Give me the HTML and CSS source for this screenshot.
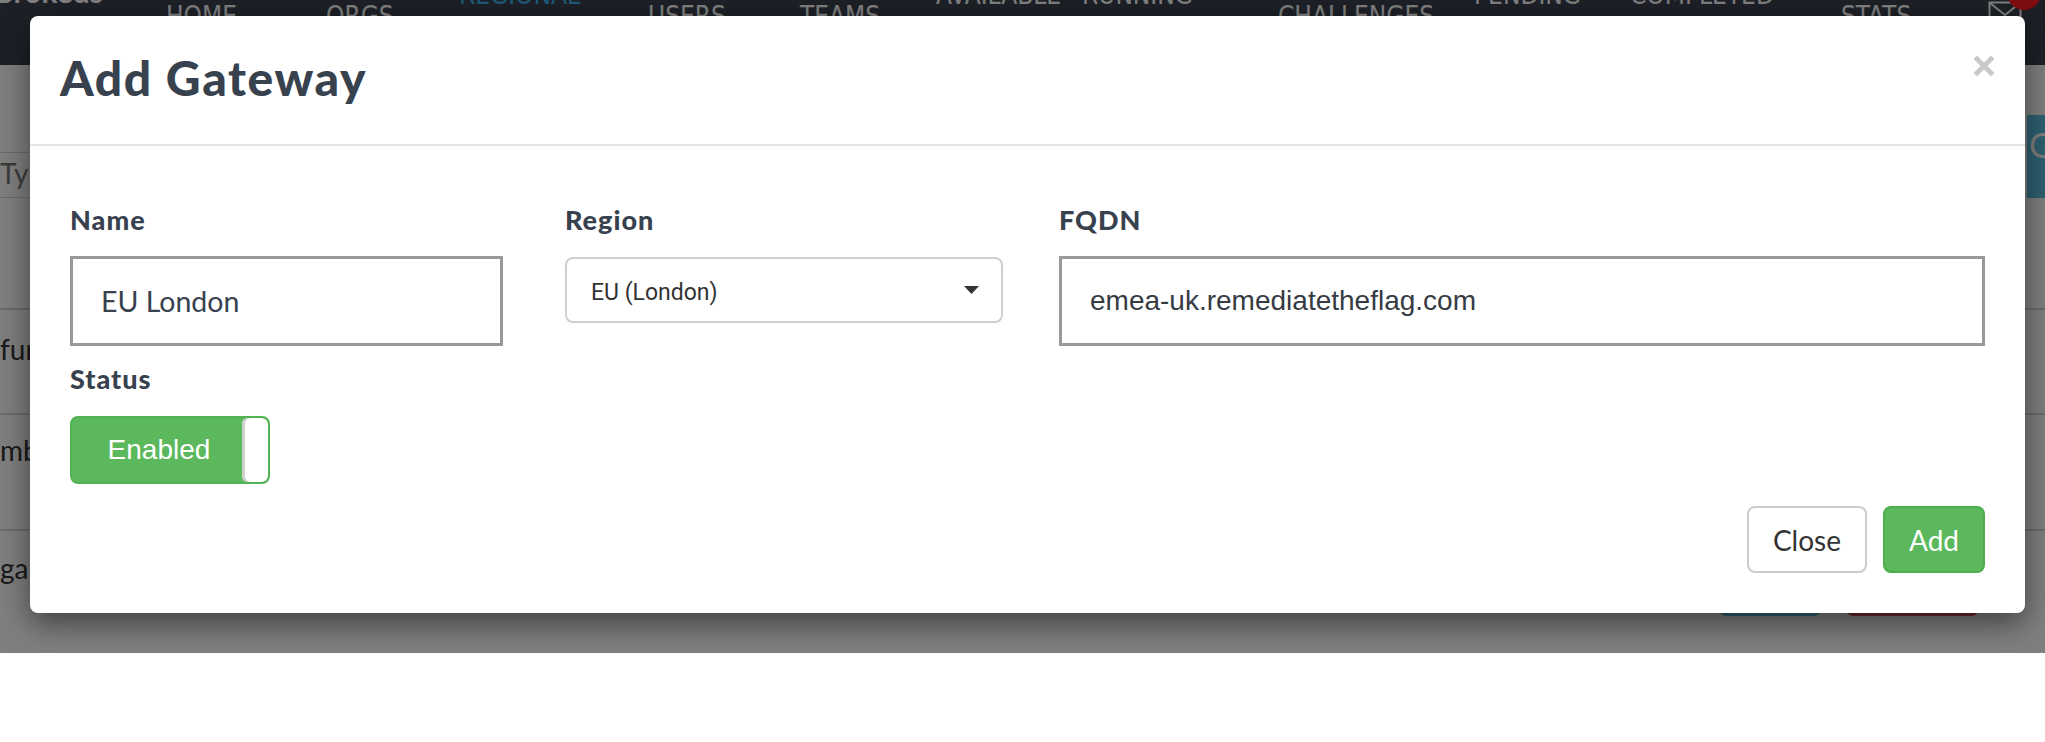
FILE: index.html
```html
<!DOCTYPE html>
<html lang="en">
<head>
<meta charset="utf-8">
<title>Add Gateway</title>
<link rel="stylesheet" href="styles.css">
</head>
<body>
<div class="app">
  <header class="topnav">
    <div class="brand nav-up">Brokeus</div>
    <span class="nav-item nav-low">HOME</span>
    <span class="nav-item nav-low">ORGS</span>
    <span class="nav-item nav-up nav-active">REGIONAL</span>
    <span class="nav-item nav-low">USERS</span>
    <span class="nav-item nav-low">TEAMS</span>
    <span class="nav-item nav-up">AVAILABLE</span>
    <span class="nav-item nav-up">RUNNING</span>
    <span class="nav-item nav-low">CHALLENGES</span>
    <span class="nav-item nav-up">PENDING</span>
    <span class="nav-item nav-up">COMPLETED</span>
    <span class="nav-item nav-low">STATS</span>
    <span class="nav-mail">
      <svg width="34" height="24" viewBox="0 0 34 24"><rect x="1.5" y="1.5" width="31" height="21" fill="none" stroke="#fff" stroke-width="2"/><path d="M2 2 L17 14 L32 2" fill="none" stroke="#fff" stroke-width="2"/></svg>
    </span>
    <span class="nav-badge"><span class="badge-dot">2</span></span>
  </header>

  <main class="page">
    <div class="toolbar">
      <div class="search">Type to search</div>
      <div class="add-btn">G</div>
    </div>
    <div class="row row-head"></div>
    <div class="row"><span class="cell">fur</span></div>
    <div class="row"><span class="cell">mb</span></div>
    <div class="row row-last">
      <span class="cell">ga</span>
      <span class="actions"><span class="act act-edit"></span><span class="act act-del"></span></span>
    </div>
  </main>

  <div class="backdrop"></div>

  <div class="modal" role="dialog">
    <div class="modal-header">
      <h4 class="modal-title">Add Gateway</h4>
      <button class="close" aria-label="Close">
        <svg width="20" height="20" viewBox="0 0 20 20"><path d="M3 3 L17 17 M17 3 L3 17" stroke="#c9c9c9" stroke-width="5" stroke-linecap="square"/></svg>
      </button>
    </div>
    <div class="modal-body">
      <div class="form-row">
        <div class="field f-name">
          <label class="label">Name</label>
          <input class="text-input name-input" type="text" value="EU London">
        </div>
        <div class="field f-region">
          <label class="label">Region</label>
          <div class="select">
            <span class="select-value">EU (London)</span>
            <svg class="caret" width="15" height="8" viewBox="0 0 15 8"><path d="M0 0 H15 L7.5 8 Z" fill="#333"/></svg>
          </div>
        </div>
        <div class="field f-fqdn">
          <label class="label">FQDN</label>
          <input class="text-input fqdn-input" type="text" value="emea-uk.remediatetheflag.com">
        </div>
      </div>
      <div class="field f-status">
        <label class="label">Status</label>
        <div class="toggle">
          <span class="toggle-on">Enabled</span>
          <span class="toggle-knob"></span>
        </div>
      </div>
    </div>
    <div class="modal-footer">
      <button class="btn btn-default">Close</button>
      <button class="btn btn-success">Add</button>
    </div>
  </div>
</div>
</body>
</html>
```

FILE: styles.css
```css
* { box-sizing: border-box; }

html, body {
  margin: 0;
  padding: 0;
}

body {
  width: 2045px;
  height: 742px;
  overflow: hidden;
  background: #fff;
  font-family: Lato, "Open Sans", sans-serif;
}

.app {
  position: relative;
  height: 653px;
  overflow: hidden;
  background: #fff;
}

/* ---------- top navigation (behind the backdrop) ---------- */
.topnav {
  height: 65px;
  background: #3a424e;
  display: grid;
  grid-template-columns: 166px 160px 133px 189px 152px 136px 146px 196px 196px 156px 211px 145px 29px 1fr;
  align-items: start;
  color: #fff;
  font-family: "DejaVu Sans Condensed", "DejaVu Sans", sans-serif;
  font-stretch: condensed;
  font-size: 26px;
  line-height: 26px;
  white-space: nowrap;
  overflow: hidden;
}

.nav-low { padding-top: 3px; }
.nav-up { margin-top: -18px; }
.nav-active { color: #3fb2f0; }

.brand {
  margin-left: -6px;
  font-family: Lato, sans-serif;
  font-weight: 700;
  font-size: 30px;
  margin-top: -22px;
}

.nav-mail { padding-top: 1px; margin-left: 2px; }
.nav-mail svg { display: block; }

.nav-badge { position: relative; }
.badge-dot {
  display: block;
  width: 34px;
  height: 34px;
  margin-top: -24px;
  margin-left: -8px;
  border-radius: 50%;
  background: #ff1a22;
  color: #fff;
  font: 700 18px/34px Lato, sans-serif;
  text-align: center;
}

/* ---------- page content (behind the backdrop) ---------- */
.page {
  padding-top: 52px;
  font-size: 28px;
  color: #333;
}

.toolbar {
  display: flex;
  align-items: flex-end;
  height: 81px;
}

.search {
  flex: 1;
  height: 46px;
  border-top: 1px solid #d6d6d6;
  border-bottom: 1px solid #d6d6d6;
  color: #777;
  font-size: 28px;
  line-height: 40px;
  padding-left: 0;
}

.add-btn {
  width: 120px;
  height: 83px;
  margin-right: -102px;
  margin-left: 2px;
  background: #5bc0de;
  color: #fff;
  font-size: 34px;
  line-height: 60px;
  padding-left: 2px;
}

.row {
  display: flex;
  align-items: flex-start;
  justify-content: space-between;
  border-bottom: 2px solid #d6d6d6;
  height: 112px;
}
.row-head { height: 112px; }
.row:nth-child(3) { height: 105px; }
.row:nth-child(3) .cell { padding-top: 22px; }
.row:nth-child(4) { height: 116px; }
.row:nth-child(4) .cell { padding-top: 18px; }
.row-last { border-bottom: 0; height: 130px; }
.row-last .cell { padding-top: 20px; }

.cell {
  padding-left: 0;
  line-height: 34px;
}

.actions {
  display: flex;
  gap: 27px;
  margin-right: 67px;
  padding-top: 29px;
}
.act { display: block; height: 56px; border-radius: 6px; }
.act-edit { width: 100px; background: #5bc0de; }
.act-del { width: 131px; background: #d9534f; }

/* ---------- backdrop ---------- */
.backdrop {
  position: absolute;
  inset: 0;
  background: rgba(0, 0, 0, 0.5);
}

/* ---------- modal ---------- */
.modal {
  position: absolute;
  left: 30px;
  top: 16px;
  width: 1995px;
  height: 597px;
  background: #fff;
  border-radius: 8px;
  box-shadow: 0 10px 30px rgba(0, 0, 0, 0.5);
  display: flex;
  flex-direction: column;
  color: #38414e;
}

.modal-header {
  height: 130px;
  padding: 33px 31px 0 30px;
  border-bottom: 2px solid #e5e5e5;
  display: flex;
  justify-content: space-between;
  align-items: flex-start;
}

.modal-title {
  margin: 0;
  font: 900 48px/1.2 Lato, sans-serif;
  letter-spacing: 1.6px;
  color: #38414e;
}

.close {
  margin-top: 7px;
  width: 20px;
  height: 20px;
  padding: 0;
  border: 0;
  background: none;
}
.close svg { display: block; }

.modal-body {
  padding: 58px 40px 0 40px;
}

.form-row {
  display: flex;
  align-items: flex-start;
}

.field {
  display: flex;
  flex-direction: column;
  align-items: flex-start;
}

.f-name { width: 433px; }
.f-region { width: 438px; margin-left: 62px; }
.f-fqdn { flex: 1; margin-left: 56px; }
.f-status { margin-top: 17px; }

.label {
  display: block;
  font: 900 27px/1.2 Lato, sans-serif;
  letter-spacing: 1px;
  color: #38414e;
  margin-bottom: 20px;
}

.text-input {
  display: block;
  width: 100%;
  height: 90px;
  margin: 0;
  border: 3px solid #999;
  border-radius: 0;
  padding: 0 28px;
  background: #fff;
  outline: none;
}

.name-input {
  font: 400 28.5px Lato, sans-serif;
  color: #38414e;
}

.fqdn-input {
  font: 400 28px "Liberation Sans", Arial, sans-serif;
  color: #363b44;
}

.select {
  width: 100%;
  height: 66px;
  margin-top: 1px;
  border: 2px solid #cfcfcf;
  border-radius: 8px;
  padding: 0 22px 0 24px;
  display: flex;
  align-items: center;
  justify-content: space-between;
  color: #333;
  font: 400 23px Roboto, "Noto Sans", sans-serif;
}
.select-value { padding-top: 4px; }
.caret { display: block; }

.toggle {
  width: 200px;
  height: 68px;
  border: 2px solid #52b352;
  border-radius: 8px;
  background: #5cb85c;
  display: flex;
  overflow: hidden;
}

.toggle-on {
  flex: 1;
  display: flex;
  align-items: center;
  justify-content: center;
  color: #fff;
  font: 400 28px "Liberation Sans", Arial, sans-serif;
  padding-left: 4px;
}

.toggle-knob {
  width: 26px;
  background: #fff;
  border-radius: 6px;
  box-shadow: inset 3px 0 0 #d0d0d0;
}

.modal-footer {
  margin-top: auto;
  padding: 0 40px 40px 40px;
  display: flex;
  justify-content: flex-end;
  gap: 16px;
}

.btn {
  height: 67px;
  padding: 0 24px;
  border: 2px solid #ccc;
  border-radius: 8px;
  font: 400 28px Lato, sans-serif;
  line-height: 1;
  cursor: pointer;
}

.btn-default {
  background: #fff;
  color: #333;
  border-color: #cccccc;
}

.btn-success {
  background: #5cb85c;
  color: #fff;
  border-color: #4cae4c;
}
```
